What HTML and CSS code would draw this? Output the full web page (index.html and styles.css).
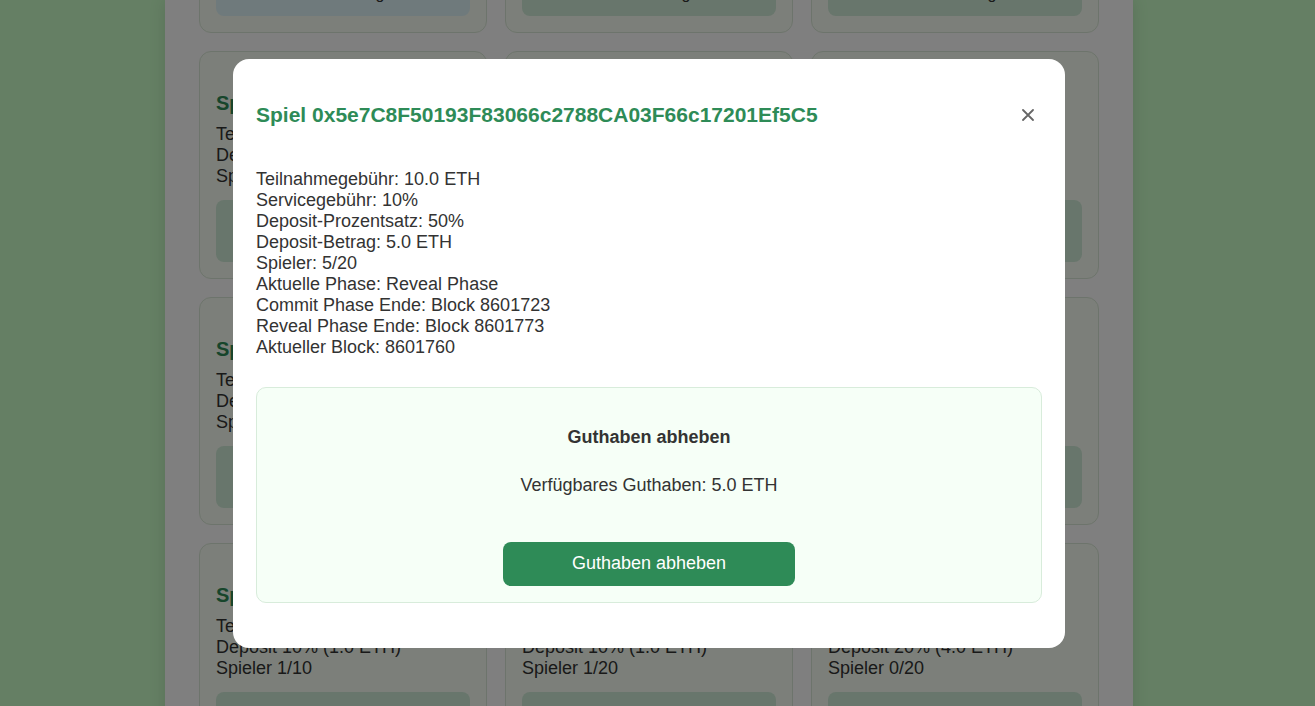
FILE: index.html
```html
<!DOCTYPE html>
<html lang="de">
<head>
<meta charset="utf-8">
<title>Spiele</title>
<link rel="stylesheet" href="styles.css">
</head>
<body>
<div class="page">
  <main class="container">
    <section class="grid">
      <article class="card">
        <h3 class="card-title">Spiel 0x1A9c4E7b22F0d</h3>
        <p>Teilnahmegebühr 5.0 ETH</p>
        <p>Deposit 10% (0.5 ETH)</p>
        <p>Spieler 3/10</p>
        <button class="card-btn card-btn-info">Details anzeigen</button>
      </article>
      <article class="card">
        <h3 class="card-title">Spiel 0x9bD3f10C7a5E2</h3>
        <p>Teilnahmegebühr 2.0 ETH</p>
        <p>Deposit 20% (0.4 ETH)</p>
        <p>Spieler 2/10</p>
        <button class="card-btn">Details anzeigen</button>
      </article>
      <article class="card">
        <h3 class="card-title">Spiel 0x4C2e8F90aB31d</h3>
        <p>Teilnahmegebühr 1.0 ETH</p>
        <p>Deposit 50% (0.5 ETH)</p>
        <p>Spieler 4/20</p>
        <button class="card-btn">Details anzeigen</button>
      </article>

      <article class="card">
        <h3 class="card-title">Spiel 0x5e7C8F50193F8</h3>
        <p>Teilnahmegebühr 10.0 ETH</p>
        <p>Deposit 50% (5.0 ETH)</p>
        <p>Spieler 5/20</p>
        <button class="card-btn">Details anzeigen</button>
      </article>
      <article class="card">
        <h3 class="card-title">Spiel 0x7aE1b09D3c44F</h3>
        <p>Teilnahmegebühr 3.0 ETH</p>
        <p>Deposit 10% (0.3 ETH)</p>
        <p>Spieler 1/10</p>
        <button class="card-btn">Details anzeigen</button>
      </article>
      <article class="card">
        <h3 class="card-title">Spiel 0x2F6d8a1E90bC7</h3>
        <p>Teilnahmegebühr 4.0 ETH</p>
        <p>Deposit 25% (1.0 ETH)</p>
        <p>Spieler 6/20</p>
        <button class="card-btn">Details anzeigen</button>
      </article>

      <article class="card">
        <h3 class="card-title">Spiel 0x8B3f0E2d71A9c</h3>
        <p>Teilnahmegebühr 6.0 ETH</p>
        <p>Deposit 10% (0.6 ETH)</p>
        <p>Spieler 2/20</p>
        <button class="card-btn">Details anzeigen</button>
      </article>
      <article class="card">
        <h3 class="card-title">Spiel 0xC04a9B7e15d2F</h3>
        <p>Teilnahmegebühr 8.0 ETH</p>
        <p>Deposit 20% (1.6 ETH)</p>
        <p>Spieler 0/10</p>
        <button class="card-btn">Details anzeigen</button>
      </article>
      <article class="card">
        <h3 class="card-title">Spiel 0x3d9E6c2A8f01B</h3>
        <p>Teilnahmegebühr 2.5 ETH</p>
        <p>Deposit 40% (1.0 ETH)</p>
        <p>Spieler 7/20</p>
        <button class="card-btn">Details anzeigen</button>
      </article>

      <article class="card">
        <h3 class="card-title">Spiel 0x6A1f3C9b0E7d4</h3>
        <p>Teilnahmegebühr 10.0 ETH</p>
        <p>Deposit 10% (1.0 ETH)</p>
        <p>Spieler 1/10</p>
        <button class="card-btn">Details anzeigen</button>
      </article>
      <article class="card">
        <h3 class="card-title">Spiel 0xE27b4D8c6a3F1</h3>
        <p>Teilnahmegebühr 10.0 ETH</p>
        <p>Deposit 10% (1.0 ETH)</p>
        <p>Spieler 1/20</p>
        <button class="card-btn">Details anzeigen</button>
      </article>
      <article class="card">
        <h3 class="card-title">Spiel 0x0f8C5a2B9d6E3</h3>
        <p>Teilnahmegebühr 20.0 ETH</p>
        <p>Deposit 20% (4.0 ETH)</p>
        <p>Spieler 0/20</p>
        <button class="card-btn">Details anzeigen</button>
      </article>
    </section>
  </main>
</div>

<div class="overlay">
  <div class="modal">
    <div class="modal-header">
      <h2 class="modal-title">Spiel 0x5e7C8F50193F83066c2788CA03F66c17201Ef5C5</h2>
      <button class="close-btn" aria-label="Schließen">
        <svg width="12" height="12" viewBox="0 0 12 12"><path d="M1 1 L11 11 M11 1 L1 11" stroke="#666" stroke-width="1.8" stroke-linecap="round" fill="none"/></svg>
      </button>
    </div>
    <div class="details">
      <p>Teilnahmegebühr: 10.0 ETH</p>
      <p>Servicegebühr: 10%</p>
      <p>Deposit-Prozentsatz: 50%</p>
      <p>Deposit-Betrag: 5.0 ETH</p>
      <p>Spieler: 5/20</p>
      <p>Aktuelle Phase: Reveal Phase</p>
      <p>Commit Phase Ende: Block 8601723</p>
      <p>Reveal Phase Ende: Block 8601773</p>
      <p>Aktueller Block: 8601760</p>
    </div>
    <div class="withdraw">
      <h4 class="withdraw-title">Guthaben abheben</h4>
      <p class="withdraw-amount">Verfügbares Guthaben: 5.0 ETH</p>
      <button class="withdraw-btn">Guthaben abheben</button>
    </div>
  </div>
</div>
</body>
</html>
```

FILE: styles.css
```css
html, body {
  margin: 0;
  padding: 0;
  height: 100%;
  overflow: hidden;
}

body {
  background: rgb(202, 255, 200);
  font-family: "Liberation Sans", Arial, sans-serif;
  color: #333;
}

.page {
  padding-right: 17px;
  height: 100%;
}

.container {
  width: 968px;
  margin: 0 auto;
  min-height: 100%;
  background: #fff;
  box-shadow: 0 0 16px rgba(0, 0, 0, 0.12);
  padding: 0 34px;
  box-sizing: border-box;
  overflow: hidden;
}

.grid {
  display: grid;
  grid-template-columns: repeat(3, 1fr);
  gap: 18px;
  margin-top: -195px;
}

.card {
  background: #f8fff4;
  border: 1px solid #dbe9d8;
  border-radius: 12px;
  padding: 16px;
  display: flex;
  flex-direction: column;
  min-width: 0;
}

.card-title {
  margin: 23px 0 9px;
  font-size: 20px;
  line-height: 24px;
  color: #2e8b57;
  white-space: nowrap;
  overflow: hidden;
  text-overflow: ellipsis;
}

.card p {
  margin: 0;
  font-size: 18px;
  line-height: 21px;
}

.card-btn {
  margin-top: 13px;
  height: 62px;
  border: none;
  border-radius: 8px;
  background: #d0ecd8;
  color: #333;
  font-family: inherit;
  font-size: 16px;
  line-height: 22px;
  padding: 29px 0 11px;
}

.card-btn-info {
  background: #dff4f9;
}

.overlay {
  position: fixed;
  inset: 0;
  background: rgba(0, 0, 0, 0.5);
  display: flex;
  align-items: center;
  justify-content: center;
  padding-right: 17px;
}

.modal {
  width: 832px;
  box-sizing: border-box;
  background: #fff;
  border-radius: 16px;
  padding: 23px;
}

.modal-header {
  display: flex;
  align-items: center;
  justify-content: space-between;
  margin-top: 19px;
}

.modal-title {
  margin: 0;
  font-size: 21px;
  line-height: 24px;
  font-weight: bold;
  color: #2e8b57;
}

.close-btn {
  width: 28px;
  height: 28px;
  border: none;
  background: none;
  padding: 0;
  display: flex;
  align-items: center;
  justify-content: center;
  cursor: pointer;
}

.details {
  margin-top: 40px;
}

.details p {
  margin: 0;
  font-size: 18px;
  line-height: 21px;
  color: #333;
}

.withdraw {
  margin: 29px 0 22px;
  border: 1px solid #d8ecdb;
  border-radius: 10px;
  background: #f6fff7;
  padding: 16px;
  display: flex;
  flex-direction: column;
  align-items: center;
}

.withdraw-title {
  margin: 23px 0 0;
  font-size: 18px;
  line-height: 21px;
  font-weight: bold;
  color: #333;
}

.withdraw-amount {
  margin: 27px 0 0;
  font-size: 18px;
  line-height: 21px;
  color: #333;
}

.withdraw-btn {
  margin-top: 46px;
  width: 292px;
  height: 44px;
  border: none;
  border-radius: 8px;
  background: #2e8b57;
  color: #fff;
  font-family: inherit;
  font-size: 18px;
}
```
